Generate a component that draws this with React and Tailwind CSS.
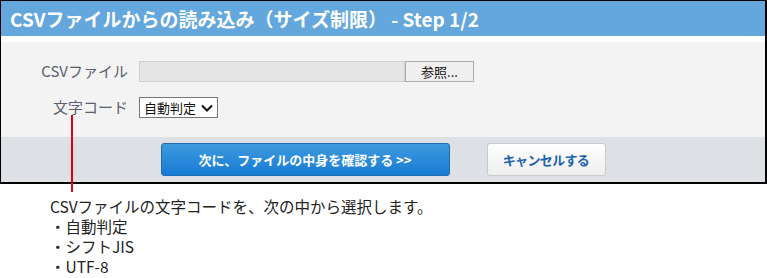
import React from "react";

const FONT = { fontFamily: '"Noto Sans CJK JP", "Noto Sans", sans-serif' };

function Chevron() {
  return (
    <svg width="14" height="10" viewBox="0 0 14 10" className="ml-1">
      <path d="M2 2.5 L7 7.5 L12 2.5" fill="none" stroke="#111" strokeWidth="2" />
    </svg>
  );
}

export default function App() {
  return (
    <div className="relative w-[767px] h-[278px] bg-white" style={FONT}>
      <div className="w-[767px] border-t border-l border-r-2 border-b-2 border-black">
        <div className="h-[35px] bg-[#63a7dd] flex items-center pl-[9px]">
          <h1 className="text-[19px] font-bold text-white leading-none">
            CSVファイルからの読み込み（サイズ制限） - Step 1/2
          </h1>
        </div>
        <div className="h-[6px] bg-white" />
        <div className="bg-[#f3f3f3] pt-[19px] pb-[19px]">
          <div className="flex items-center h-[20px]">
            <div className="w-[127px] text-right text-[15px] text-[#58606b]">CSVファイル</div>
            <div className="ml-[11px] w-[266px] h-[21px] bg-[#e5e5e5] border border-[#cfcfcf]" />
            <button className="w-[69px] h-[21px] bg-[#efefef] border border-[#adadad] text-[13px] text-[#111] leading-none">
              参照...
            </button>
          </div>
          <div className="flex items-center h-[21px] mt-[16px]">
            <div className="w-[127px] text-right text-[15px] text-[#58606b]">文字コード</div>
            <div className="ml-[11px] w-[79px] h-[21px] bg-white border border-[#767676] flex items-center pl-[4px] text-[13px] text-[#111] leading-none">
              自動判定
              <Chevron />
            </div>
          </div>
        </div>
        <div className="bg-[#dde0e5] h-[45px] flex justify-center gap-[37px] pt-[6px]">
          <button className="w-[289px] h-[33px] rounded-[3px] border border-[#1f6cb4] bg-gradient-to-b from-[#3d9adf] to-[#167bd3] text-white text-[13px] font-bold">
            次に、ファイルの中身を確認する &gt;&gt;
          </button>
          <button className="w-[119px] h-[33px] rounded-[3px] border border-[#c6c9ce] bg-gradient-to-b from-white to-[#eeeeee] text-[#1b62ad] text-[13px] font-bold tracking-[-0.05em]">
            キャンセルする
          </button>
        </div>
      </div>
      <div className="mt-[12px] pl-[50px] text-[15.5px] leading-[20px] text-[#222]">
        <p>CSVファイルの文字コードを、次の中から選択します。</p>
        <p>・自動判定</p>
        <p>・シフトJIS</p>
        <p>・UTF-8</p>
      </div>
      <div className="absolute left-[71px] top-[115px] w-[2px] h-[77px] bg-[#e60012]" />
    </div>
  );
}
